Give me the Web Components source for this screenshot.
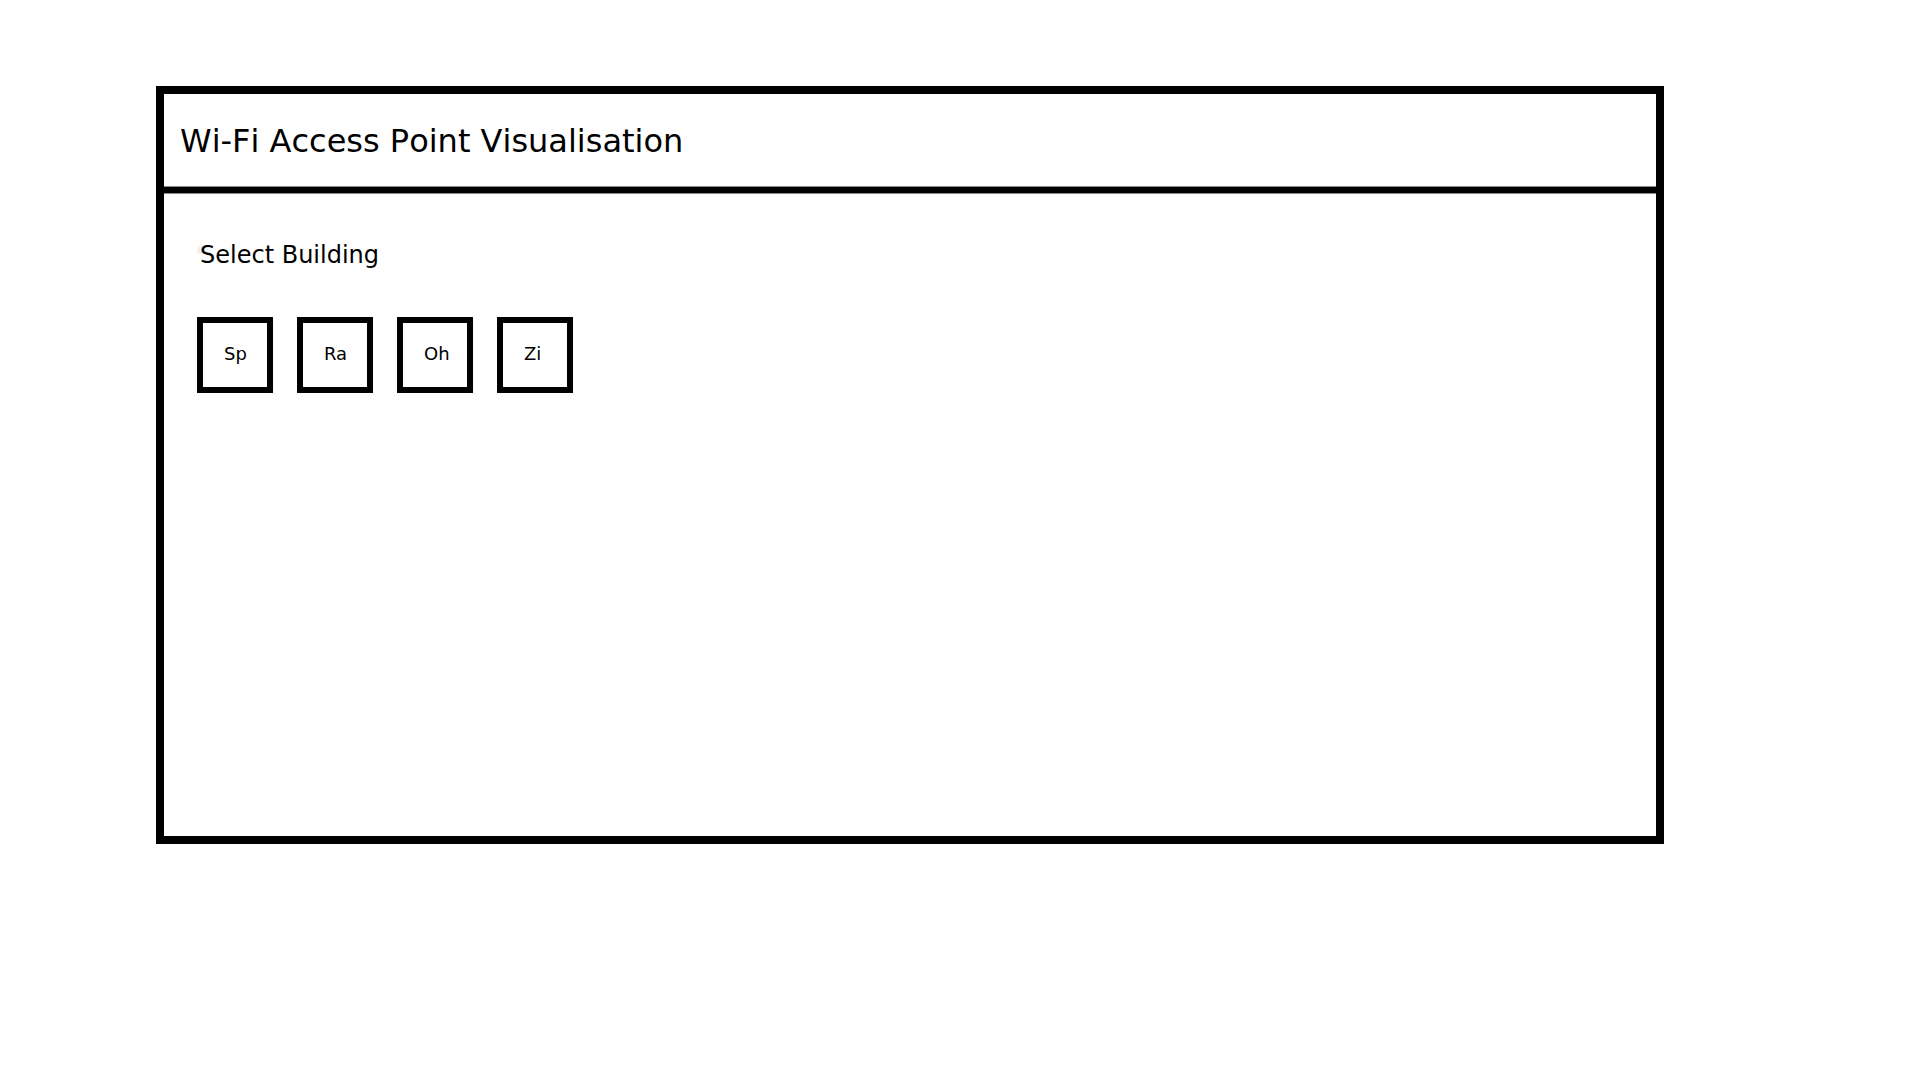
<!DOCTYPE html>
<html lang="en">
<head>
<meta charset="utf-8">
<title>Wi-Fi Access Point Visualisation</title>
<style>
  body { margin: 0; background: #fff; color: #000; font-family: "DejaVu Sans", sans-serif; font-kerning: none; }
</style>
</head>
<body>
<wifi-frame>
  <span slot="title">Wi-Fi Access Point Visualisation</span>
  <building-picker label="Select Building">
    <building-tile>Sp</building-tile>
    <building-tile>Ra</building-tile>
    <building-tile>Oh</building-tile>
    <building-tile>Zi</building-tile>
  </building-picker>
</wifi-frame>

<template id="frame-template">
  <style>
    :host { display: flex; padding: 86px 256px 0 156px; }
    .frame { flex: 1; display: flex; flex-direction: column; box-sizing: border-box; min-height: calc(100vh - 322px); border: 8px solid #000; }
    header { display: flex; align-items: center; padding: 28px 16px 26px; border-bottom: 6px solid #000; box-shadow: inset 0 -1px #888, 0 1px #888; }
    h1 { margin: 0; font-size: 32px; font-weight: 400; line-height: 39px; }
    main { padding: 48px 33px; }
  </style>
  <div class="frame">
    <header><h1><slot name="title"></slot></h1></header>
    <main><slot></slot></main>
  </div>
</template>

<template id="picker-template">
  <style>
    :host { display: block; }
    h2 { margin: 0 0 48px; padding-left: 3px; font-size: 24px; font-weight: 400; line-height: 28px; background: radial-gradient(circle at 3px 9px, #f0f0f0 3px, transparent 4px); }
    .tiles { display: flex; flex-wrap: wrap; gap: 24px; }
  </style>
  <h2 id="label"></h2>
  <div class="tiles" role="group" aria-labelledby="label"><slot></slot></div>
</template>

<template id="tile-template">
  <style>
    :host { display: block; }
    button { display: block; box-sizing: border-box; width: 76px; height: 76px; padding: 0 0 2px 21px; border: 6px solid #000; border-radius: 0; background: #fff; color: #000; font: 18px/24px "DejaVu Sans", sans-serif; text-align: left; cursor: pointer; }
  </style>
  <button type="button"><slot></slot></button>
</template>

<script>
  class TemplateElement extends HTMLElement {
    constructor() {
      super();
      const template = document.getElementById(this.constructor.templateId);
      this.attachShadow({ mode: "open" }).append(template.content.cloneNode(true));
    }
  }
  class WifiFrame extends TemplateElement {
    static templateId = "frame-template";
  }
  class BuildingPicker extends TemplateElement {
    static templateId = "picker-template";
    connectedCallback() {
      this.shadowRoot.getElementById("label").textContent = this.getAttribute("label");
    }
  }
  class BuildingTile extends TemplateElement {
    static templateId = "tile-template";
  }
  customElements.define("wifi-frame", WifiFrame);
  customElements.define("building-picker", BuildingPicker);
  customElements.define("building-tile", BuildingTile);
</script>
</body>
</html>
